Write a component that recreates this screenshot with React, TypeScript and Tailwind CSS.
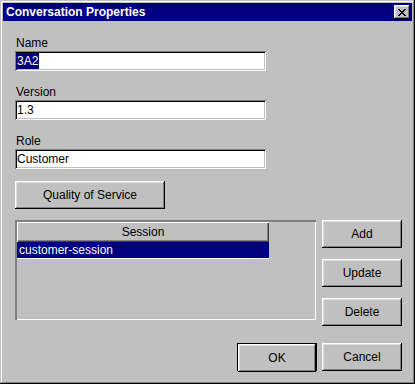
import React from 'react';

const raised =
  'bg-[#c0c0c0] shadow-[inset_-1px_-1px_0_#000,inset_1px_1px_0_#fff,inset_-2px_-2px_0_#808080,inset_2px_2px_0_#dfdfdf]';
const sunken =
  'bg-white shadow-[inset_1px_1px_0_#808080,inset_-1px_-1px_0_#fff,inset_2px_2px_0_#000,inset_-2px_-2px_0_#c0c0c0]';

function CloseGlyph() {
  return (
    <svg width="8" height="7" viewBox="0 0 8 7" shapeRendering="crispEdges">
      <path
        fill="#000"
        d="M0 0h2v1H0zM6 0h2v1H6zM1 1h2v1H1zM5 1h2v1H5zM2 2h4v1H2zM3 3h2v1H3zM2 4h4v1H2zM1 5h2v1H1zM5 5h2v1H5zM0 6h2v1H0zM6 6h2v1H6z"
      />
    </svg>
  );
}

function Field({ label, children }: { label: string; children: React.ReactNode }) {
  return (
    <div className="flex flex-col">
      <div className="h-[14px] leading-[14px] mb-px pl-px">{label}</div>
      <div className={`${sunken} h-[20px] w-[251px] flex items-center px-[2px] leading-[16px]`}>
        {children}
      </div>
    </div>
  );
}

function Button({ label, className = '' }: { label: string; className?: string }) {
  return (
    <div className={`${raised} h-[28px] flex items-center justify-center ${className}`}>
      {label}
    </div>
  );
}

export default function App() {
  return (
    <div className="w-[415px] h-[384px] bg-[#c0c0c0] p-[3px] flex flex-col text-[12px] text-black font-['Liberation_Sans',Arial,sans-serif] shadow-[inset_-1px_-1px_0_#000,inset_1px_1px_0_#c0c0c0,inset_-2px_-2px_0_#808080,inset_2px_2px_0_#fff]">
      {/* Title bar */}
      <div className="h-[18px] bg-[#000080] flex items-center justify-between pl-[3px] pr-[2px]">
        <span className="text-white font-bold text-[12px] leading-[18px]">
          Conversation Properties
        </span>
        <div className={`${raised} w-[16px] h-[14px] flex items-center justify-center`}>
          <CloseGlyph />
        </div>
      </div>

      {/* Body */}
      <div className="flex-1 flex flex-col pl-[12px] pr-[10px] pt-[15px]">
        <div className="flex flex-col gap-[14px]">
          <Field label="Name">
            <span className="bg-[#000080] text-white h-[16px] leading-[16px] -ml-px px-px">3A2</span>
          </Field>
          <Field label="Version">1.3</Field>
          <Field label="Role">Customer</Field>
        </div>

        <Button label="Quality of Service" className="w-[150px] mt-[12px]" />

        <div className="flex gap-[6px] mt-[11px]">
          <div className="w-[301px] h-[100px] bg-[#c0c0c0] p-[2px] shadow-[inset_1px_1px_0_#808080,inset_2px_2px_0_#808080,inset_-1px_-1px_0_#fff,inset_-2px_-2px_0_#c0c0c0]">
            <div className="w-[252px] flex flex-col">
              <div className="h-[20px] flex items-center justify-center bg-[#c0c0c0] shadow-[inset_1px_1px_0_#fff,inset_-1px_-1px_0_#404040,inset_-2px_-2px_0_#808080]">
                Session
              </div>
              <div className="h-[17px] bg-[#000080] text-white leading-[16px] pl-[2px] border-b border-white">
                customer-session
              </div>
            </div>
          </div>
          <div className="w-[80px] flex flex-col gap-[11px]">
            <Button label="Add" />
            <Button label="Update" />
            <Button label="Delete" />
          </div>
        </div>

        <div className="flex justify-end gap-[5px] mt-[17px]">
          <div className="border border-black w-[80px] h-[28px]">
            <Button label="OK" className="h-[26px]" />
          </div>
          <Button label="Cancel" className="w-[80px]" />
        </div>
      </div>
    </div>
  );
}
